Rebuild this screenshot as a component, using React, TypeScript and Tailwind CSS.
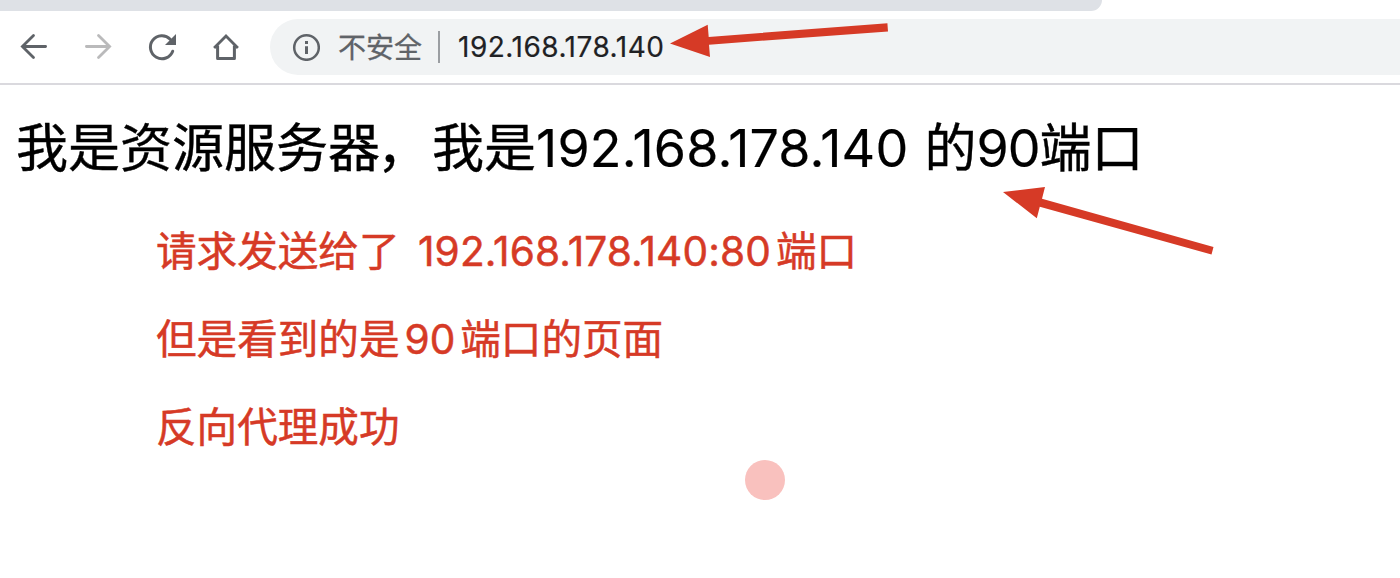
function BackIcon() {
  return (
    <svg className="size-8" viewBox="0 0 32 32" fill="none" stroke="#5f6368" strokeWidth="2.8" strokeLinecap="round" strokeLinejoin="miter">
      <path d="M27.6 15.5H4.5M15.5 4.4L4.4 15.5L15.5 26.6" />
    </svg>
  );
}

function ForwardIcon() {
  return (
    <svg className="size-8" viewBox="0 0 32 32" fill="none" stroke="#bababb" strokeWidth="2.8" strokeLinecap="round" strokeLinejoin="miter">
      <path d="M4.4 15.5H27.5M16.5 4.4L27.6 15.5L16.5 26.6" />
    </svg>
  );
}

function ReloadIcon() {
  return (
    <svg className="size-8" viewBox="0 0 32 32" fill="none">
      <path d="M26.7 20.2A11.5 11.5 0 1 1 24.2 8.2" stroke="#5f6368" strokeWidth="3" strokeLinecap="round" />
      <path d="M30 3V14H19Z" fill="#5f6368" />
    </svg>
  );
}

function HomeIcon() {
  return (
    <svg className="size-8" viewBox="0 0 32 32" fill="none" stroke="#5f6368" strokeWidth="2.8">
      <path d="M4.1 17L16 5L27.9 17" />
      <path d="M7.6 14.5V27.5H24.4V14.5" strokeWidth="3" strokeLinejoin="round" />
    </svg>
  );
}

function InfoIcon() {
  return (
    <svg className="size-7 shrink-0" viewBox="0 0 28 28" fill="none">
      <circle cx="14.5" cy="14.5" r="12.3" stroke="#5f6368" strokeWidth="2.5" />
      <path d="M13 8.1H16V11H13ZM13 13.2H16V21H13Z" fill="#5f6368" />
    </svg>
  );
}

export default function App() {
  return (
    <div className="relative flex h-[578px] w-[1400px] flex-col overflow-hidden bg-white font-['Inter','Noto_Sans_CJK_SC',sans-serif]">
      <div className="h-[11px] w-[1102px] shrink-0 rounded-br-[16px] bg-[#dee1e6]" />
      <header className="flex h-[74px] shrink-0 items-center border-b-2 border-[#dad9de] pl-[18px]">
        <nav className="flex gap-8">
          <BackIcon />
          <ForwardIcon />
          <ReloadIcon />
          <HomeIcon />
        </nav>
        <div className="ml-7 flex h-14 flex-1 items-center rounded-l-full bg-[#f1f3f4] pl-[22px]">
          <InfoIcon />
          <span className="ml-[18px] pt-px text-[28px] leading-8 whitespace-nowrap text-[#5f6368] [-webkit-text-stroke:0.3px_#5f6368]">不安全</span>
          <span className="ml-4 h-8 w-0.5 bg-[#9b9ea2]" />
          <span className="ml-[18px] text-[28px] leading-8 tracking-[0.5px] whitespace-nowrap text-[#202124] [-webkit-text-stroke:0.2px_#202124]">192.168.178.140</span>
        </div>
      </header>
      <main>
        <h1 className="mt-6 ml-4 flex h-20 items-center text-[52px] leading-[80px] whitespace-pre text-black [-webkit-text-stroke:0.4px_black]">
          <span>我是资源服务器</span>
          <span className="-ml-[3px] mr-[3px]">，</span>
          <span>我是</span>
          <span className="tracking-[0.2px] [-webkit-text-stroke:0.2px_black]">192.168.178.140</span>
          <span className="ml-4">的</span>
          <span className="-tracking-[1px] [-webkit-text-stroke:0.2px_black]">90</span>
          <span>端口</span>
        </h1>
        <div className="mt-[19px] ml-[156px] text-[40.6px] leading-[88px] text-[#d63a26] [-webkit-text-stroke:0.5px_#d63a26]">
          <p className="flex h-[88px] items-center whitespace-pre">
            <span>请求发送给了</span>
            <span className="ml-[18.5px] tracking-[0.13px]">192.168.178.140:80</span>
            <span className="ml-[5px]">端口</span>
          </p>
          <p className="flex h-[88px] items-center whitespace-pre">
            <span>但是看到的是</span>
            <span className="ml-[5px]">90</span>
            <span className="ml-[5px]">端口的页面</span>
          </p>
          <p className="flex h-[88px] items-center whitespace-pre">反向代理成功</p>
        </div>
      </main>
      <svg className="pointer-events-none absolute inset-0" width="1400" height="578" viewBox="0 0 1400 578">
        <path d="M670 43.5L707.7 24.7L708.7 36.9L887.4 23.3L888 31.4L709 44.7L710 57Z" fill="#d63a26" />
        <path d="M1003 192L1045 187L1042 198.8L1213.5 247L1211.5 254.5L1039.8 206.8L1036.8 218.3Z" fill="#d63a26" />
      </svg>
      <div className="absolute top-[460px] left-[745px] size-10 rounded-full bg-[#f9c1be]" />
    </div>
  );
}
